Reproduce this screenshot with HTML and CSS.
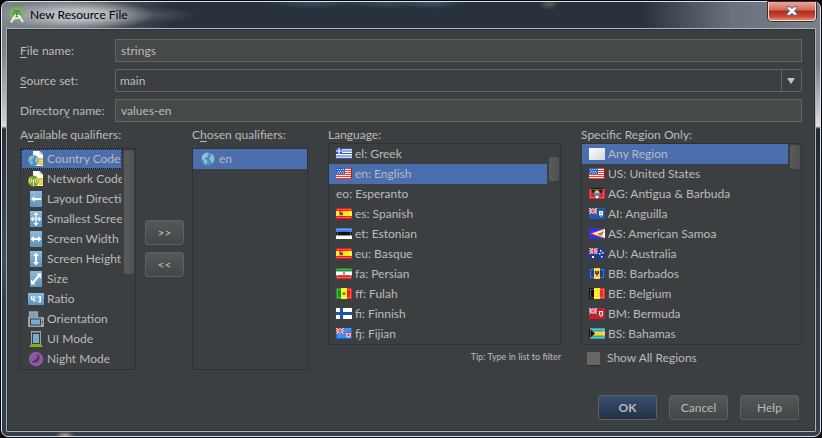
FILE: index.html
```html
<!DOCTYPE html>
<html lang="en">
<head>
<meta charset="utf-8">
<title>New Resource File</title>
<link rel="stylesheet" href="styles.css">
</head>
<body>
<svg class="defs" aria-hidden="true">
  <defs>
    <linearGradient id="tile" x1="0" y1="0" x2="0" y2="1"><stop offset="0" stop-color="#8fbbdc"/><stop offset="1" stop-color="#5e93bd"/></linearGradient>
    <linearGradient id="sheet" x1="0" y1="0" x2="1" y2="1"><stop offset="0" stop-color="#fff"/><stop offset="1" stop-color="#d4d4d4"/></linearGradient>
    <symbol id="gloss" viewBox="0 0 16 12"><rect x="1.500" y="1.500" width="13" height="8" fill="none" stroke="#fff" stroke-opacity=".3"/></symbol>
    <symbol id="us" viewBox="0 0 16 12">
      <path fill="#f4f4f4" d="M0 0h16v11H0z"/><path stroke="#f23b30" d="M0 .5h16M0 2.500h16M0 4.500h16M0 6.500h16M0 8.500h16M0 10.500h16"/>
      <path fill="#2f5fc8" d="M0 0h9v6H0z"/><path stroke="#fff" stroke-dasharray="1 1" d="M1 1.500h7M2 3.500h6M1 5h7" stroke-width=".8"/>
      <path d="M15.500 0v11" stroke="#d01010"/>
    </symbol>
    <symbol id="es" viewBox="0 0 16 12">
      <path fill="#f01818" d="M0 0h16v11H0z"/><path fill="#ffee1c" d="M0 3h16v5H0z"/>
      <path fill="#d9822b" d="M3 3.500h4v4H3z"/><path fill="#c01c50" d="M4 3h1v2h2v2H4z"/><use href="#gloss"/>
    </symbol>
    <symbol id="jack" viewBox="0 0 8 6">
      <path fill="#20388c" d="M0 0h8v6H0z"/><path stroke="#f0c8d0" stroke-width="1.400" d="M0 0l8 6M8 0L0 6"/>
      <path stroke="#fff" stroke-width="2.200" d="M4 0v6M0 3h8"/><path stroke="#e03040" stroke-width="1.200" d="M4 0v6M0 3h8"/>
    </symbol>
    <symbol id="globe" viewBox="0 0 16 16">
      <circle cx="8" cy="8" r="6.800" fill="#528fb8"/><path fill="#8fbfd4" d="M2 5.500C3.500 2.500 5.500 1.600 8 1.800L9 3 7.500 4 8 5.500 5.500 7 4 7.500 6.500 9 7.500 10.500 6 13.500 4.500 13 4 10 2 8zM10 3l3 .8 1.500 3-1 4-2 1.500L11 10 9.500 8.500 10 6.500 11.500 5.500z"/>
    </symbol>
    <symbol id="card" viewBox="0 0 16 16"><path fill="#fff" d="M5 0h6.500L15 3.500V15H5z"/><path fill="#c8ccd0" d="M11.500 0v3.500H15z"/><path fill="#f4c318" d="M11 7h4v7h-4z"/><path stroke="#fff2a8" d="M11 9.500h4M11 11.800h4" stroke-width=".7"/></symbol>
  </defs>
</svg>

<main class="window">
  <header class="titlebar">
    <svg class="logo" viewBox="0 0 16 16" aria-hidden="true"><circle cx="7.500" cy="6.800" r="6.800" fill="#78b84a"/><path fill="#4c7a3c" d="M4 7.500a3.800 4 0 017.500 0l-1.500 2H5.500z"/><path d="M5 2.500l1 1.500M10.500 2.500l-1 1.500" stroke="#4c7a3c"/><path fill="#566a5e" d="M6.500 3.500h2.500v3H6.500z"/><path fill="none" stroke="#f0f2f0" stroke-width="2" d="M7 7L2 15.500M8.500 7l5.500 8"/><path fill="none" stroke="#f0f2f0" stroke-width="1.500" d="M4.500 11q3.500 1.800 7.500-2"/><circle cx="7.800" cy="7" r="1.500" fill="#4a5550" stroke="#e8e8e8" stroke-width=".6"/></svg>
    <h1 class="title">New Resource File</h1>
    <button class="close" aria-label="Close"><svg viewBox="0 0 12 10" aria-hidden="true"><path fill="#fff" stroke="#54607a" stroke-linejoin="round" d="M.8.800h3.400L6 2.800 7.800.8h3.400v1.300L8.500 5l2.700 2.900v1.300H7.800L6 7.200 4.200 9.200H.8V7.900L3.500 5 .8 2.100z"/></svg></button>
  </header>

  <form class="content">
    <div class="fields">
      <label for="file"><u>F</u>ile name:</label>
      <input id="file" class="field" type="text" value="strings">
      <label for="source"><u>S</u>ource set:</label>
      <div class="combo">
        <select id="source"><option>main</option></select>
        <svg class="arrow" viewBox="0 0 8 6" aria-hidden="true"><path fill="#c4c4c4" d="M0 0h8L4 6z"/></svg>
      </div>
      <label for="dir">Director<u>y</u> name:</label>
      <input id="dir" class="field" type="text" value="values-en">
    </div>

    <div class="panels">
      <section class="panel">
        <h2 class="caption">A<u>v</u>ailable qualifiers:</h2>
        <div class="listbox low">
          <ul class="rows" role="listbox" aria-label="Available qualifiers">
            <li class="row selected focus" role="option"><svg class="icon" viewBox="0 0 16 16"><use href="#card"/><use href="#globe" x="-1" y="3" width="13" height="13"/></svg>Country Code</li>
            <li class="row" role="option"><svg class="icon" viewBox="0 0 16 16"><use href="#card"/><circle cx="5.500" cy="10" r="5.500" fill="#7f9f1c"/><path fill="none" stroke="#fff" stroke-width=".8" d="M5.500 9v6M3.800 11.500q-1.300-2 0-4M7.200 11.500q1.300-2 0-4M2.200 12.500q-1.700-3 0-6M8.800 12.500q1.700-3 0-6"/><circle cx="5.500" cy="9.500" r="1" fill="#fff"/></svg>Network Code</li>
            <li class="row" role="option"><svg class="icon" viewBox="0 0 16 16"><path fill="url(#tile)" d="M2 0h12v16H2z"/><path fill="#fff" d="M3 8l3.500-3v2H13v2H6.500v2z"/></svg>Layout Direction</li>
            <li class="row" role="option"><svg class="icon" viewBox="0 0 16 16"><path fill="url(#tile)" d="M2 0h12v16H2z"/><path stroke="#fff" stroke-width="1.200" d="M8 3v10M4 8h8"/><path fill="#fff" d="M8 1l2.500 3h-5zM8 15l2.500-3h-5zM2.500 8l3-2.500v5zM13.500 8l-3-2.500v5z"/></svg>Smallest Screen Width</li>
            <li class="row" role="option"><svg class="icon" viewBox="0 0 16 16"><path fill="url(#tile)" d="M2 0h12v16H2z"/><path fill="#fff" d="M2.500 8L6 5v2h4V5l3.500 3L10 11V9H6v2z"/></svg>Screen Width</li>
            <li class="row" role="option"><svg class="icon" viewBox="0 0 16 16"><path fill="url(#tile)" d="M2 0h12v16H2z"/><path fill="#fff" d="M8 1.500L11 5H9v6h2l-3 3.500L5 11h2V5H5z"/></svg>Screen Height</li>
            <li class="row" role="option"><svg class="icon" viewBox="0 0 16 16"><path fill="url(#tile)" d="M2 0h12v16H2z"/><path stroke="#fff" stroke-width="2" d="M5 11.500l6-7"/><path fill="#fff" d="M13 2.500v5l-4.500-5zM3 13.500v-5l4.500 5z"/></svg>Size</li>
            <li class="row" role="option"><svg class="icon" viewBox="0 0 16 16"><path fill="url(#tile)" d="M0 2h16v12H0z"/><path fill="none" stroke="#fff" stroke-width="1.200" d="M3.600 5v3.500h3M6 5v6M10 5.600h2.400v5H10M10.500 8h2"/><path fill="#fff" d="M7.500 6h1v1h-1zM7.500 9h1v1h-1z"/></svg>Ratio</li>
            <li class="row" role="option"><svg class="icon" viewBox="0 0 16 16"><path fill="#6fa5cb" stroke="#a3a3a3" stroke-width="1.300" d="M1.500 1h8v6h-8z"/><path fill="#a3a3a3" d="M0 6h16v10H0z"/><path fill="#3c3f41" d="M2 7.500h11v7H2z"/><path fill="#78abd0" d="M3 8.500h9v5H3z"/><path fill="#444" d="M14 10h1v2h-1z"/></svg>Orientation</li>
            <li class="row" role="option"><svg class="icon" viewBox="0 0 16 16"><path fill="#a3a3a3" d="M3 0h10v13H3z"/><path fill="#3c3f41" d="M4 1.500h8V13H4z"/><path fill="#78abd0" d="M5 3h6v9H5z"/><path fill="#8aac1c" d="M3 13h10l2 3H1z"/></svg>UI Mode</li>
            <li class="row" role="option"><svg class="icon" viewBox="0 0 16 16"><circle cx="8" cy="8" r="7" fill="#9a68ae"/><circle cx="8" cy="8" r="6" fill="#8a55a1"/><path fill="#50305f" d="M9.500 2.500A5 5 0 113.500 10.500 6.500 6.500 0 009.500 2.500z"/></svg>Night Mode</li>
          </ul>
          <span class="thumb tall"></span>
        </div>
      </section>

      <div class="movers">
        <button type="button" class="btn small">&gt;&gt;</button>
        <button type="button" class="btn small">&lt;&lt;</button>
      </div>

      <section class="panel">
        <h2 class="caption">C<u>h</u>osen qualifiers:</h2>
        <div class="listbox low fill">
          <ul class="rows" role="listbox" aria-label="Chosen qualifiers">
            <li class="row selected" role="option"><svg class="icon"><use href="#globe"/></svg>en</li>
          </ul>
        </div>
      </section>

      <section class="panel spaced">
        <h2 class="caption">Language:</h2>
        <div class="listbox">
          <ul class="rows" role="listbox" aria-label="Language">
            <li class="row" role="option"><svg class="flag" viewBox="0 0 16 12"><path fill="#fff" d="M0 0h16v11H0z"/><path stroke="#3058c8" stroke-width="1.200" d="M0 .6h16M0 3h16M0 5.500h16M0 8h16M0 10.400h16"/><path fill="#3058c8" d="M0 0h6v6H0z"/><path stroke="#fff" stroke-width="1.200" d="M3 0v6M0 3h6"/></svg>el: Greek</li>
            <li class="row selected" role="option"><svg class="flag"><use href="#us"/></svg>en: English</li>
            <li class="row plain" role="option">eo: Esperanto</li>
            <li class="row" role="option"><svg class="flag"><use href="#es"/></svg>es: Spanish</li>
            <li class="row" role="option"><svg class="flag" viewBox="0 0 16 12"><path fill="#3c7ae0" d="M0 0h16v4H0z"/><path fill="#111" d="M0 4h16v3.500H0z"/><path fill="#fff" d="M0 7.500h16V11H0z"/><use href="#gloss"/></svg>et: Estonian</li>
            <li class="row" role="option"><svg class="flag"><use href="#es"/></svg>eu: Basque</li>
            <li class="row" role="option"><svg class="flag" viewBox="0 0 16 12"><path fill="#188c30" d="M0 0h16v4H0z"/><path fill="#fff" d="M0 3.500h16v4H0z"/><path fill="#e82020" d="M0 7.500h16V11H0z"/><circle cx="8" cy="5.500" r="1.400" fill="#e87070"/><use href="#gloss"/></svg>fa: Persian</li>
            <li class="row" role="option"><svg class="flag" viewBox="0 0 16 12"><path fill="#189020" d="M0 0h5.500v11H0z"/><path fill="#fff020" d="M5 0h6v11H5z"/><path fill="#f02020" d="M11 0h5v11h-5z"/><circle cx="8" cy="5.500" r="1.500" fill="#389020"/><use href="#gloss"/></svg>ff: Fulah</li>
            <li class="row" role="option"><svg class="flag" viewBox="0 0 16 12"><path fill="#fff" d="M0 0h16v11H0z"/><path stroke="#2450a8" stroke-width="3" d="M0 5.500h16M5.500 0v11"/></svg>fi: Finnish</li>
            <li class="row" role="option"><svg class="flag" viewBox="0 0 16 12"><path fill="#3494f0" d="M0 0h16v11H0z"/><use href="#jack" width="8" height="6"/><path fill="#fff" d="M10 4h5v4l-2.500 2L10 8z"/><path stroke="#e03030" d="M10 4.500h5M12.500 4v5M10 7h5"/><path fill="none" stroke="#1860d8" d="M.5 6v4.500h15V.5"/></svg>fj: Fijian</li>
          </ul>
          <span class="thumb offset"></span>
        </div>
        <p class="tip">Tip: Type in list to filter</p>
      </section>

      <section class="panel spaced">
        <h2 class="caption">Specific Region Only:</h2>
        <div class="listbox">
          <ul class="rows" role="listbox" aria-label="Specific region only">
            <li class="row selected" role="option"><svg class="flag" viewBox="0 0 16 12"><path fill="url(#sheet)" d="M0 0h16v12H0z"/></svg>Any Region</li>
            <li class="row" role="option"><svg class="flag"><use href="#us"/></svg>US: United States</li>
            <li class="row" role="option"><svg class="flag" viewBox="0 0 16 12"><path fill="#e01c28" d="M0 0h16v11H0z"/><path fill="#181818" d="M1 0h14l-3 5H4z"/><path fill="#4090d8" d="M4 5h8l-2 3H6z"/><path fill="#fff" d="M6 8h4l-2 3z"/><path fill="#f8d030" d="M5 5l1-1-.5-1.500L7 3l1-1.500L9 3l1.500-.5L10 4l1 1z"/><use href="#gloss"/></svg>AG: Antigua &amp; Barbuda</li>
            <li class="row" role="option"><svg class="flag" viewBox="0 0 16 12"><path fill="#2458a8" d="M0 0h16v11H0z"/><use href="#jack" width="8" height="6"/><path fill="#e8f4f8" d="M10 3h4v4l-2 2-2-2z"/><path fill="#e8b040" d="M11 4h2v2h-2z"/><path fill="#58b8d8" d="M10.500 7h3L12 9z"/></svg>AI: Anguilla</li>
            <li class="row" role="option"><svg class="flag" viewBox="0 0 16 12"><path fill="#2838d8" d="M0 0h16v11H0z"/><path fill="#e83040" d="M16 0v11L0 5.500z"/><path fill="#fff" d="M16 1v9L3 5.500z"/><path fill="#b08040" d="M8 5l3 0 3-2 1 1-2 3-2 1z"/><path fill="#e8c050" d="M11 7h3v1h-3z"/></svg>AS: American Samoa</li>
            <li class="row" role="option"><svg class="flag" viewBox="0 0 16 12"><path fill="#203c98" d="M0 0h16v11H0z"/><use href="#jack" width="9" height="6"/><path fill="#fff" d="M3 8h2v2H3zM11 2h1.500v1.500H11zM10 5h1.500v1.500H10zM13 4h1.500v1.500H13zM12 8h1.500v1.500H12z"/></svg>AU: Australia</li>
            <li class="row" role="option"><svg class="flag" viewBox="0 0 16 12"><path fill="#183c98" d="M0 0h16v11H0z"/><path fill="#ffd038" d="M5 0h6v11H5z"/><path fill="none" stroke="#222" d="M6.500 3v2.500h3V3M8 3v5"/><use href="#gloss"/></svg>BB: Barbados</li>
            <li class="row" role="option"><svg class="flag" viewBox="0 0 16 12"><path fill="#111" d="M0 0h5.500v11H0z"/><path fill="#ffec20" d="M5 0h6v11H5z"/><path fill="#f02828" d="M11 0h5v11h-5z"/><use href="#gloss"/></svg>BE: Belgium</li>
            <li class="row" role="option"><svg class="flag" viewBox="0 0 16 12"><path fill="#d01c28" d="M0 0h16v11H0z"/><use href="#jack" width="8" height="6"/><path fill="#fff" d="M10 3h4v4l-2 2-2-2z"/><path fill="#389040" d="M10.500 6h3L12 8.500z"/><path fill="#d04040" d="M11 4h2v2h-2z"/></svg>BM: Bermuda</li>
            <li class="row" role="option"><svg class="flag" viewBox="0 0 16 12"><path fill="#28a8b0" d="M0 0h16v11H0z"/><path fill="#ffd030" d="M0 3.500h16v4H0z"/><path fill="#111" d="M0 0l6 5.500L0 11z"/><use href="#gloss"/></svg>BS: Bahamas</li>
          </ul>
          <span class="thumb"></span>
        </div>
        <label class="check"><input type="checkbox"> Show All Regions</label>
      </section>
    </div>

    <footer class="actions">
      <button type="button" class="btn primary">OK</button>
      <button type="button" class="btn">Cancel</button>
      <button type="button" class="btn">Help</button>
    </footer>
  </form>
</main>
</body>
</html>
```
FILE: styles.css
```css
* { box-sizing: border-box; }

body {
  margin: 0;
  padding: 1px;
  min-height: 100vh;
  display: flex;
  background: #08080c;
  color: #bbb;
  font: 12px/16px Lato, "Open Sans", sans-serif;
}

h1, h2, p, ul { margin: 0; padding: 0; font: inherit; }
ul { list-style: none; }
u { text-underline-offset: 2px; }
button, input, select { font: inherit; color: inherit; }

.defs { position: absolute; width: 0; height: 0; }

/* Translucent window frame */
.window {
  flex: 1;
  min-width: 0;
  display: flex;
  flex-direction: column;
  padding: 0 4px 4px;
  border: 1px solid #dfe3e6;
  border-radius: 7px;
  background:
    radial-gradient(ellipse 10px 5px at 63px 100%, #b5aaa0, transparent),
    linear-gradient(#6f7884, #7c8490 50px, #c8ccd2 118px, #dde0e3 124px, #27313c 127px, #3e5062 260px, transparent 300px) left / 5px 100% no-repeat,
    linear-gradient(#777e8a, #777e8a 60px, #c8ccd2 112px, #e3e5e7 124px, #202a34 127px, #2f3f4c 300px, transparent 380px) right / 5px 100% no-repeat,
    #30404d;
}

.titlebar {
  display: flex;
  align-items: center;
  height: 26px;
  margin: 0 -4px;
  padding: 0 4px 0 7px;
  border-radius: 6px 6px 0 0;
  background:
    radial-gradient(ellipse 80px 15px at 75px 13px, #b9bcbf 35%, transparent),
    radial-gradient(ellipse 40px 8px at 155px 13px, #47515b, transparent),
    radial-gradient(ellipse 45px 7px at 310px 0, #3d4b68, transparent),
    radial-gradient(ellipse 45px 7px at 385px 0, #3d4b68, transparent),
    radial-gradient(ellipse 30px 7px at 430px 0, #46547a, transparent),
    radial-gradient(ellipse 10px 6px at 547px 2px, #56605f, transparent),
    linear-gradient(90deg, #80868e, #6a727b 60px, #28323d 170px, #28323d 640px, #6b727d 730px, #7b818c);
}

.logo { width: 16px; height: 16px; margin-right: 5px; }
.title { flex: 1; color: #000; }

.close {
  align-self: flex-start;
  display: grid;
  place-items: center;
  width: 48px;
  height: 19px;
  padding: 0;
  border: 1px solid #f0dcd8;
  border-top: 0;
  border-radius: 0 0 4px 4px;
  background: linear-gradient(#e9a79c, #d4695a 45%, #b02c18 50%, #c64a34 80%, #e08a6c);
  box-shadow: 0 0 0 1px #4b2a2c;
}
.close svg { width: 12px; height: 10px; }

.content {
  flex: 1;
  display: flex;
  flex-direction: column;
  padding: 10px 13px 11px;
  border: 1px solid #a9b4b9;
  border-radius: 1px;
  background: #3c3f41;
  box-shadow: inset 0 0 0 1px #2c3133;
}

.fields {
  display: grid;
  grid-template-columns: 95px 1fr;
  grid-auto-rows: 23px;
  row-gap: 7px;
  align-items: center;
}

.field, .combo select {
  width: 100%;
  height: 23px;
  padding: 0 5px;
  border: 1px solid #646464;
  border-radius: 0;
  background: #45494a;
}
.combo { position: relative; display: flex; }
.combo select { appearance: none; padding: 0 4px; background: #3c3f41; border-radius: 2px; }
.combo::after {
  content: "";
  position: absolute;
  inset: 0 20px 0 auto;
  border-left: 1px solid #646464;
}
.arrow { position: absolute; right: 7px; top: 9px; width: 8px; height: 6px; }

.panels {
  display: grid;
  grid-template-columns: 116fr 56px 116fr 253fr 241fr;
  margin-top: 5px;
}
.panel { display: flex; flex-direction: column; min-width: 0; }
.spaced { margin-left: 20px; }
.caption { white-space: nowrap; }

.listbox {
  position: relative;
  border: 1px solid #2f3133;
  padding-right: 13px;
}
.low { margin-top: 5px; }
.fill { flex: 1; padding-right: 0; }

.row {
  display: flex;
  align-items: center;
  gap: 3px;
  height: 20px;
  padding-left: 7px;
  overflow: hidden;
  white-space: nowrap;
}
.selected { background: #4b6eaf; }
.focus { outline: 1px dotted #111; outline-offset: -1px; }
.icon { flex: none; width: 16px; height: 16px; }
.flag { flex: none; width: 16px; height: 12px; }

.thumb {
  position: absolute;
  top: 1px;
  right: 1px;
  width: 10px;
  height: 24px;
  border-radius: 2px;
  background: linear-gradient(90deg, #595a5b, #505152);
}
.offset { top: 13px; }
.tall { height: 124px; }

.movers {
  display: flex;
  flex-direction: column;
  gap: 7px;
  padding: 93px 8px 0 9px;
}

.tip { margin-top: 4px; text-align: right; font-size: 9px; }

.check { display: flex; align-items: center; gap: 7px; margin: 5px 0 0 6px; }
.check input {
  appearance: none;
  width: 13px;
  height: 13px;
  margin: 0;
  border-radius: 1px;
  background: #666;
  box-shadow: 0 1px 0 #2b2d2e;
}

.actions {
  display: flex;
  justify-content: flex-end;
  gap: 12px;
  margin-top: auto;
  padding-right: 3px;
}
.btn {
  width: 59px;
  height: 25px;
  padding: 0;
  border: 1px solid #5e6162;
  border-radius: 3px;
  background: linear-gradient(#53585a, #424647);
}
.small { width: 39px; }
.primary { font-weight: 700; background: linear-gradient(#384f6f, #233143); }
```
